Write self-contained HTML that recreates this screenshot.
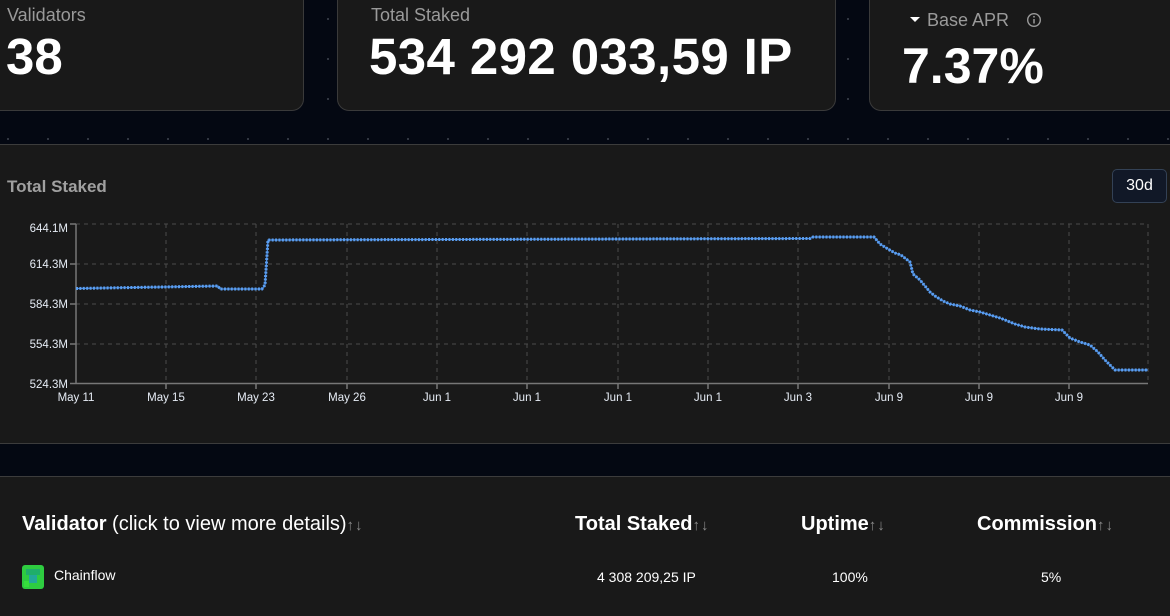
<!DOCTYPE html>
<html><head><meta charset="utf-8"><style>
*{margin:0;padding:0;box-sizing:border-box}
body{width:1170px;height:600px;overflow:hidden;background:#040812;font-family:"Liberation Sans",sans-serif;position:relative;
background-image:radial-gradient(circle,#3a3f4a 0.8px,transparent 1.2px);background-size:40px 40px;background-position:-12px -1px}
.card{position:absolute;background:#191919;border:1px solid #3a3a3a;border-radius:12px}
.lbl{position:absolute;color:#9a9a9a;font-size:18px}
.big{position:absolute;color:#fff;font-weight:bold}
.sec{position:absolute;left:0;width:1170px;background:#191919;border-top:1px solid #3c3c3c;border-bottom:1px solid #3c3c3c}
.ax{font-size:11.5px;fill:#e6ecf5}
.arr{color:#8a8a8a;font-size:15px;font-weight:normal;letter-spacing:1px}
.th{position:absolute;top:513px;font-size:20px;color:#fff;font-weight:bold}
</style></head><body>
<div class="card" style="left:-20px;top:-20px;width:324px;height:131px"></div>
<div class="lbl" style="left:7px;top:5px">Validators</div>
<div class="big" style="left:6px;top:27px;font-size:51px">38</div>
<div class="card" style="left:337px;top:-20px;width:499px;height:131px"></div>
<div class="lbl" style="left:371px;top:5px">Total Staked</div>
<div class="big" style="left:369px;top:27px;font-size:51px;letter-spacing:0.4px">534 292 033,59 IP</div>
<div class="card" style="left:869px;top:-20px;width:330px;height:131px"></div>
<div style="position:absolute;left:910px;top:17px;width:0;height:0;border-left:5px solid transparent;border-right:5px solid transparent;border-top:5px solid #fff"></div>
<div class="lbl" style="left:927px;top:10px">Base APR</div>
<svg style="position:absolute;left:1026px;top:12px" width="16" height="16"><circle cx="8" cy="8" r="6.3" fill="none" stroke="#9a9a9a" stroke-width="1.4"/><line x1="8" y1="7" x2="8" y2="11.5" stroke="#9a9a9a" stroke-width="1.5"/><circle cx="8" cy="4.8" r="0.9" fill="#9a9a9a"/></svg>
<div class="big" style="left:902px;top:37px;font-size:50px">7.37%</div>

<div class="sec" style="top:144px;height:300px">
<div style="position:absolute;left:7px;top:32px;color:#a0a0a0;font-size:17px;font-weight:bold">Total Staked</div>
<div style="position:absolute;left:1112px;top:24px;width:55px;height:34px;background:#111827;border:1px solid #334155;border-radius:5px;color:#fff;font-size:16px;text-align:center;line-height:32px">30d</div>
</div>
<div style="position:absolute;left:0;top:444px;width:1170px;height:32px;background:#040812"></div>
<svg style="position:absolute;left:0;top:210px" width="1170" height="200">
<g stroke="#4a4a4a" stroke-dasharray="4 4" stroke-width="1">
<line x1="76" y1="14" x2="1148" y2="14"/><line x1="76" y1="54" x2="1148" y2="54"/><line x1="76" y1="94" x2="1148" y2="94"/><line x1="76" y1="134" x2="1148" y2="134"/>
<line x1="166" y1="14" x2="166" y2="173"/><line x1="256" y1="14" x2="256" y2="173"/><line x1="347" y1="14" x2="347" y2="173"/><line x1="437" y1="14" x2="437" y2="173"/><line x1="527" y1="14" x2="527" y2="173"/><line x1="618" y1="14" x2="618" y2="173"/><line x1="708" y1="14" x2="708" y2="173"/><line x1="798" y1="14" x2="798" y2="173"/><line x1="889" y1="14" x2="889" y2="173"/><line x1="979" y1="14" x2="979" y2="173"/><line x1="1069" y1="14" x2="1069" y2="173"/><line x1="1148" y1="14" x2="1148" y2="173"/>
</g>
<g stroke="#777" stroke-width="1.5"><line x1="76" y1="14" x2="76" y2="174"/><line x1="70" y1="173.5" x2="1148" y2="173.5"/>
<line x1="70" y1="14" x2="76" y2="14"/><line x1="70" y1="54" x2="76" y2="54"/><line x1="70" y1="94" x2="76" y2="94"/><line x1="70" y1="134" x2="76" y2="134"/>
<line x1="166" y1="173" x2="166" y2="179"/><line x1="256" y1="173" x2="256" y2="179"/><line x1="347" y1="173" x2="347" y2="179"/><line x1="437" y1="173" x2="437" y2="179"/><line x1="527" y1="173" x2="527" y2="179"/><line x1="618" y1="173" x2="618" y2="179"/><line x1="708" y1="173" x2="708" y2="179"/><line x1="798" y1="173" x2="798" y2="179"/><line x1="889" y1="173" x2="889" y2="179"/><line x1="979" y1="173" x2="979" y2="179"/><line x1="1069" y1="173" x2="1069" y2="179"/></g>
<g class="ax" text-anchor="end"><text x="68" y="22">644.1M</text><text x="68" y="58">614.3M</text><text x="68" y="98">584.3M</text><text x="68" y="138">554.3M</text><text x="68" y="178">524.3M</text></g>
<g class="ax" text-anchor="middle"><text x="76" y="191">May 11</text><text x="166" y="191">May 15</text><text x="256" y="191">May 23</text><text x="347" y="191">May 26</text><text x="437" y="191">Jun 1</text><text x="527" y="191">Jun 1</text><text x="618" y="191">Jun 1</text><text x="708" y="191">Jun 1</text><text x="798" y="191">Jun 3</text><text x="889" y="191">Jun 9</text><text x="979" y="191">Jun 9</text><text x="1069" y="191">Jun 9</text></g>
<polyline fill="none" stroke="#4a8fe8" stroke-width="1.2" points="76,78.5 218,76 220,79 262,79 265,75 268,30 810,28.5 813,27 874,27 880,34 888,39 895,43 901,45 910,52 913,64 920,70 930,82 935,86 943,91 950,94 960,96 970,100 980,102 990,105 1000,108 1015,114 1025,117 1040,119 1062,120 1070,128 1080,132 1090,135 1098,142 1105,150 1115,160 1148,160"/>
<polyline fill="none" stroke="#5b9ef0" stroke-width="3" stroke-dasharray="2 1.4" points="76,78.5 218,76 220,79 262,79 265,75 268,30 810,28.5 813,27 874,27 880,34 888,39 895,43 901,45 910,52 913,64 920,70 930,82 935,86 943,91 950,94 960,96 970,100 980,102 990,105 1000,108 1015,114 1025,117 1040,119 1062,120 1070,128 1080,132 1090,135 1098,142 1105,150 1115,160 1148,160"/>
</svg>

<div class="sec" style="top:476px;height:140px;border-bottom:none"></div>
<div class="th" style="left:22px;font-weight:normal"><b>Validator</b> (click to view more details)<span class="arr">↑↓</span></div>
<div class="th" style="left:575px">Total Staked<span class="arr">↑↓</span></div>
<div class="th" style="left:801px">Uptime<span class="arr">↑↓</span></div>
<div class="th" style="left:977px">Commission<span class="arr">↑↓</span></div>
<svg style="position:absolute;left:22px;top:565px" width="22" height="24"><rect width="22" height="24" rx="3" fill="#2ecc40"/><rect x="4" y="4" width="14" height="6" fill="#1fae6a"/><rect x="7" y="10" width="8" height="8" fill="#22a89a"/><rect x="2" y="16" width="5" height="6" fill="#35e03c"/></svg>
<div style="position:absolute;left:54px;top:567px;font-size:14px;color:#fff">Chainflow</div>
<div style="position:absolute;left:597px;top:569px;font-size:14px;color:#fff">4 308 209,25 IP</div>
<div style="position:absolute;left:832px;top:569px;font-size:14px;color:#fff">100%</div>
<div style="position:absolute;left:1041px;top:569px;font-size:14px;color:#fff">5%</div>
</body></html>
